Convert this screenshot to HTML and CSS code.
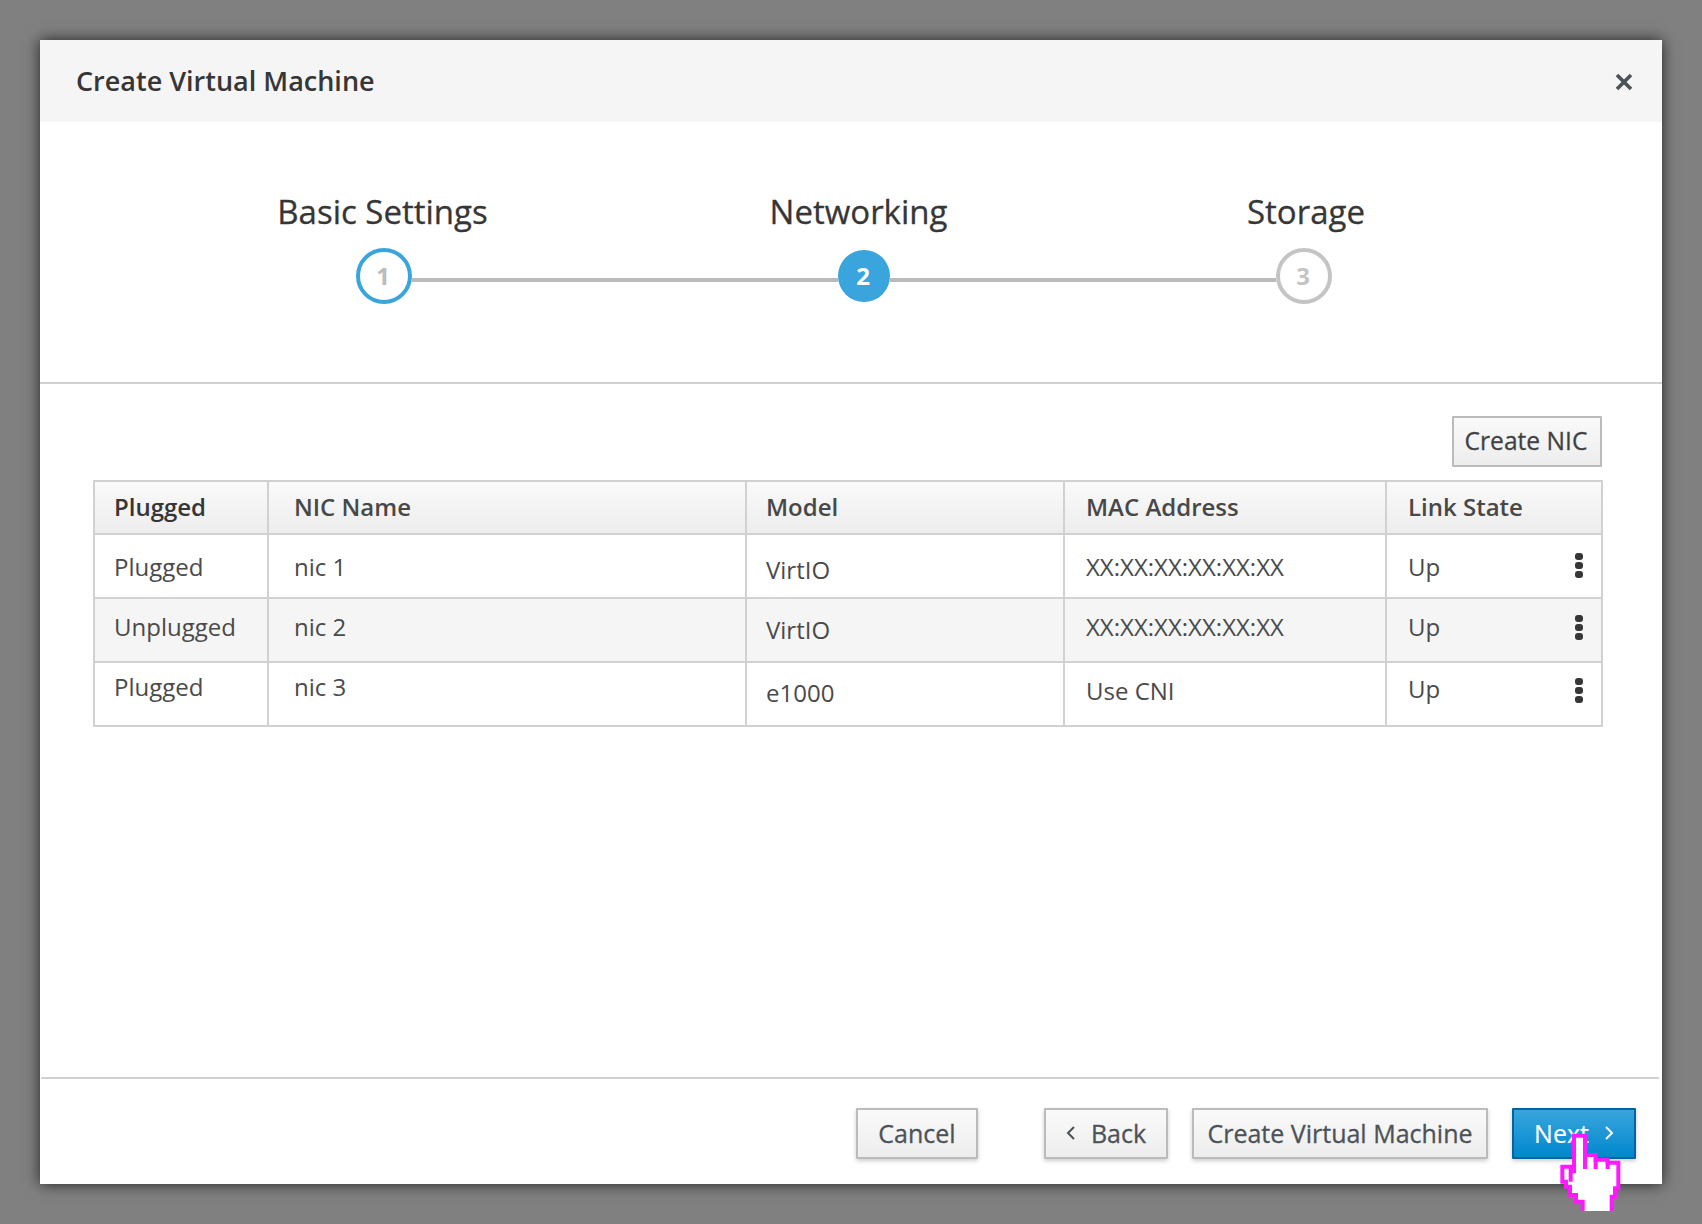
FILE: index.html
```html
<!DOCTYPE html>
<html lang="en">
<head>
  <meta charset="utf-8">
  <title>Create Virtual Machine</title>
  <link rel="stylesheet" href="styles.css">
</head>
<body>
  <div class="modal">
    <div class="modal-header">
      <h1>Create Virtual Machine</h1>
      <svg class="close" width="20" height="20" viewBox="0 0 20 20"><path d="M3 3 L17 17 M17 3 L3 17" stroke="#4d5258" stroke-width="3.6" fill="none"/></svg>
    </div>

    <div class="wizard">
      <div class="step-titles">
        <div class="step-title first">Basic Settings</div>
        <div class="step-title second">Networking</div>
        <div class="step-title third">Storage</div>
      </div>
      <div class="step-track">
        <div class="circle done">1</div>
        <div class="connector long"></div>
        <div class="circle active">2</div>
        <div class="connector short"></div>
        <div class="circle todo">3</div>
      </div>
    </div>

    <div class="modal-body">
      <div class="toolbar">
        <button class="btn btn-square">Create NIC</button>
      </div>
      <table class="nics">
        <colgroup>
          <col class="col-plugged">
          <col class="col-name">
          <col class="col-model">
          <col class="col-mac">
          <col class="col-link">
        </colgroup>
        <thead>
          <tr>
            <th class="bold">Plugged</th>
            <th class="pad-name">NIC Name</th>
            <th class="pad-model">Model</th>
            <th class="pad-mac">MAC Address</th>
            <th class="pad-link">Link State</th>
          </tr>
        </thead>
        <tbody>
          <tr class="row-one">
            <td>Plugged</td>
            <td class="pad-name">nic 1</td>
            <td class="pad-model nudge">VirtIO</td>
            <td class="pad-mac">XX:XX:XX:XX:XX:XX</td>
            <td class="pad-link link-cell">Up <span class="kebab"><i></i><i></i><i></i></span></td>
          </tr>
          <tr class="row-two">
            <td>Unplugged</td>
            <td class="pad-name">nic 2</td>
            <td class="pad-model nudge">VirtIO</td>
            <td class="pad-mac">XX:XX:XX:XX:XX:XX</td>
            <td class="pad-link link-cell">Up <span class="kebab"><i></i><i></i><i></i></span></td>
          </tr>
          <tr class="row-three">
            <td>Plugged</td>
            <td class="pad-name">nic 3</td>
            <td class="pad-model nudge-lg">e1000</td>
            <td class="pad-mac nudge-md">Use CNI</td>
            <td class="pad-link link-cell nudge">Up <span class="kebab"><i></i><i></i><i></i></span></td>
          </tr>
        </tbody>
      </table>
    </div>

    <div class="modal-footer">
      <button class="btn cancel">Cancel</button>
      <button class="btn back">
        <svg width="12" height="16" viewBox="0 0 12 16"><path d="M9 2 L3 8 L9 14" stroke="#4d5258" stroke-width="2" fill="none"/></svg>
        Back
      </button>
      <button class="btn create">Create Virtual Machine</button>
      <button class="btn btn-primary next">
        Next
        <svg width="12" height="16" viewBox="0 0 12 16"><path d="M3 2 L9 8 L3 14" stroke="#fff" stroke-width="2" fill="none"/></svg>
      </button>
    </div>
  </div>

  <!-- mouse pointer, sits on top of the Next button -->
  <svg class="pointer" width="80" height="90" viewBox="0 0 240 270">
    <path d="M72 32 H105 V90 H137 V104 H173 V113 H205 V190 H195 V215 H185 V258 H98 V230 H78 V210 H60 V185 H48 V170 H37 V125 H72 Z" fill="#fff"/>
    <g fill="none" stroke="#ff19ff" stroke-width="12">
      <path d="M98 258 V230 H78 V210 H60 V185 H48 V170 H37 V125 H62 V170"/>
      <path d="M72 145 V32 H105 V90 H137 V104 H173 V113 H205 V190 H195 V215 H185 V258"/>
      <path d="M105 90 V132 M137 100 V132 M173 110 V132"/>
    </g>
  </svg>
</body>
</html>
```

FILE: styles.css
```css
* { box-sizing: border-box; }
html, body { margin: 0; padding: 0; height: 100%; overflow: hidden; }
body {
  background: #808080;
  font-family: "Open Sans", "Noto Sans", sans-serif;
  color: #363636;
  padding: 40px;
}

.modal {
  width: 1622px; height: 1144px;
  background: #fff;
  display: flex; flex-direction: column;
  box-shadow: 0 0 14px rgba(0, 0, 0, 0.75);
}

.modal-header {
  height: 82px; flex: none;
  background: #f5f5f5;
  display: flex; align-items: center; justify-content: space-between;
  padding: 0 28px 2px 36px;
}
.modal-header h1 { margin: 0; font-size: 27px; font-weight: 600; }
.close { display: block; margin-top: 4px; }

/* Wizard steps */
.wizard {
  height: 262px; flex: none;
  border-bottom: 2px solid #d1d1d1;
  padding-top: 70px;
}
.step-titles { display: flex; height: 41px; margin-left: 142px; }
.step-title { font-size: 33px; line-height: 40px; text-align: center; -webkit-text-stroke: 0.3px #363636; }
.step-title.first { width: 401px; }
.step-title.second { width: 551px; }
.step-title.third { width: 344px; }
.step-track { display: flex; align-items: center; margin: 15px 0 0 316px; height: 56px; }
.circle {
  flex: none; border-radius: 50%;
  display: flex; align-items: center; justify-content: center;
  font-size: 24px; font-weight: 700; padding: 0 2px 2px 0;
}
.circle.done { width: 56px; height: 56px; border: 4px solid #39a5dc; color: #bbb; }
.circle.active { width: 52px; height: 52px; background: #39a5dc; color: #fff; }
.circle.todo { width: 56px; height: 56px; border: 4px solid #c4c4c4; color: #c4c4c4; }
.connector { height: 4px; margin-top: 7px; background: #bbb; }
.connector.long { width: 426px; }
.connector.short { width: 386px; }

/* NIC table */
.modal-body { flex: 1; padding: 32px 60px 0 53px; }
.toolbar { display: flex; justify-content: flex-end; height: 64px; }
.nics { width: 1508px; table-layout: fixed; border-collapse: collapse; font-size: 24px; }
.col-plugged { width: 174px; }
.col-name { width: 478px; }
.col-model { width: 318px; }
.col-mac { width: 322px; }
.col-link { width: 216px; }
.nics th, .nics td { border: 2px solid #d1d1d1; padding: 0 0 0 19px; text-align: left; line-height: 32px; }
.nics th {
  height: 53px; font-weight: 600; color: #484848; padding-bottom: 2px;
  background: linear-gradient(#fafafa, #ededed);
}
.nics th.bold { color: #363636; }
.nics td { height: 64px; vertical-align: top; color: #4a4a4a; }
.nics .pad-name { padding-left: 25px; }
.nics .pad-model { padding-left: 19px; }
.nics .pad-mac { padding-left: 21px; }
.nics .pad-link { padding-left: 21px; }
.row-one td { padding-top: 16px; }
.row-two td { padding-top: 12px; background: #f5f5f5; }
.row-three td { padding-top: 8px; }
.row-one td.nudge { padding-top: 19px; }
.row-two td.nudge { padding-top: 15px; }
.row-three td.nudge { padding-top: 10px; }
.row-three td.nudge-md { padding-top: 12px; }
.row-three td.nudge-lg { padding-top: 14px; }
.link-cell { position: relative; }
.kebab {
  position: absolute; right: 18px; top: 18px;
  display: flex; flex-direction: column; gap: 2px;
}
.kebab i { display: block; width: 8px; height: 7px; border-radius: 3px; background: #363636; }
.row-two .kebab { top: 16px; }
.nudge .kebab { top: 15px; }

/* Buttons */
.btn {
  font: inherit; font-size: 25px; line-height: 32px;
  color: #4d5258;
  height: 51px; padding: 0 0 2px;
  background: linear-gradient(#fafafa, #ededed);
  border: 2px solid #bbb; border-radius: 1px;
  box-shadow: 0 2px 4px rgba(0, 0, 0, 0.2);
  -webkit-text-stroke: 0.3px #4d5258;
}
.btn-square { width: 150px; font-size: 24.6px; box-shadow: none; color: #3f3f3f; padding-right: 2px; }

.modal-footer {
  flex: none; height: 107px;
  margin: 0 3px 0 1px;
  border-top: 2px solid #d1d1d1;
  display: flex; justify-content: flex-end; gap: 24px;
  padding: 29px 23px 0 0;
}
.cancel { width: 122px; margin-right: 42px; }
.back { width: 124px; display: flex; align-items: center; justify-content: center; gap: 14px; padding-right: 1px; }
.create { width: 296px; }
.btn-primary {
  background: linear-gradient(#39a5dc, #0088ce);
  border-color: #00659c; color: #fff;
  -webkit-text-stroke: 0.2px #fff;
}
.next { width: 124px; display: flex; align-items: center; justify-content: center; gap: 14px; padding-left: 1px; }

.pointer { position: absolute; left: 1550px; top: 1125px; }
```
